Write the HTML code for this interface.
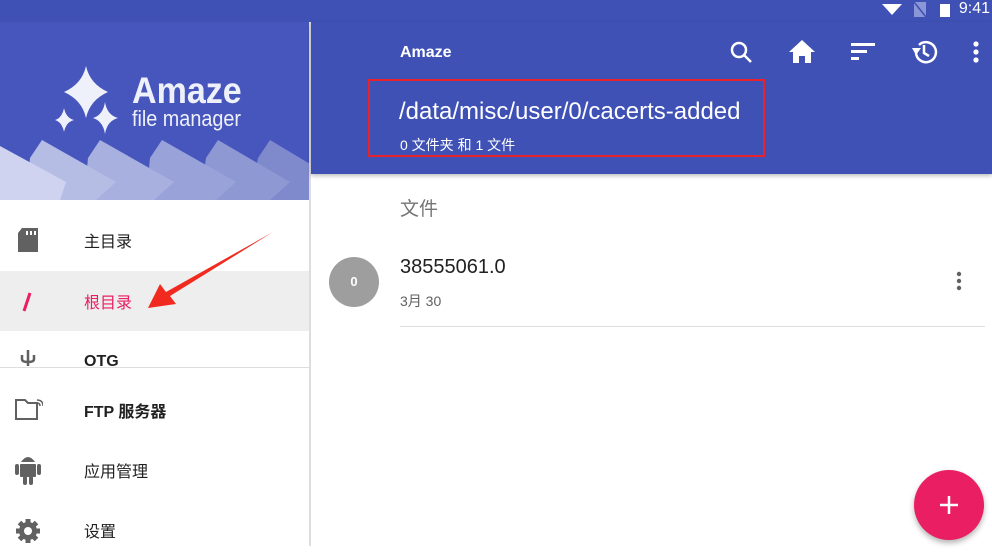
<!DOCTYPE html>
<html><head><meta charset="utf-8"><style>
*{margin:0;padding:0;box-sizing:border-box}
body{width:992px;height:546px;overflow:hidden;background:#fff;font-family:"Liberation Sans","Noto Sans CJK SC",sans-serif;position:relative}
.abs{position:absolute}
.item{position:absolute;left:0;width:309px;height:60px}
.item .t{position:absolute;left:84px;top:50%;transform:translateY(-50%);font-size:16px;color:#212121}
</style></head><body>
<div class="abs" style="left:0;top:0;width:992px;height:22px;background:#3f51b5"></div>
<div class="abs" style="right:2px;top:0;height:22px;line-height:18px;color:#fff;font-size:16px">9:41</div>
<svg class="abs" style="left:880px;top:0" width="80" height="20"><polygon points="2,4 22,4 12,15" fill="#fff"/><polygon points="34,2 46,2 46,17 34,17" fill="#8b96d6"/><line x1="34" y1="2" x2="46" y2="17" stroke="#3f51b5" stroke-width="1.5"/><rect x="60" y="4" width="10" height="13" fill="#fff"/></svg>
<!-- drawer header -->
<div class="abs" style="left:0;top:22px;width:309px;height:178px;background:#4756bd;overflow:hidden">
<svg width="309" height="178" style="position:absolute;left:0;top:0">
<polygon points="270,118 340,160 320,178 250,178 258,136" fill="#7f8acd"/>
<polygon points="218,118 290,160 270,178 200,178 206,136" fill="#8e98d3"/>
<polygon points="162,118 236,160 216,178 146,178 150,136" fill="#9aa3d9"/>
<polygon points="100,118 174,160 154,178 84,178 88,136" fill="#a8b0df"/>
<polygon points="42,118 116,160 96,178 26,178 30,136" fill="#b6bde5"/>
<polygon points="0,124 66,160 60,178 0,178" fill="#cfd3ef"/>
<g fill="#eef0fa">
<path d="M86,44 Q90,62 108,70 Q90,78 86,96 Q82,78 64,70 Q82,62 86,44Z"/>
<path d="M64,86 Q66,96 74,98 Q66,100 64,110 Q62,100 55,98 Q62,96 64,86Z"/>
<path d="M105,80 Q107,93 118,96 Q107,99 105,112 Q103,99 93,96 Q103,93 105,80Z"/>
</g>
</svg>
<div class="abs" style="left:132px;top:48px;color:#eef0fa;font-size:37px;font-weight:bold;transform:scaleX(0.92);transform-origin:left">Amaze</div>
<div class="abs" style="left:132px;top:84px;color:#eef0fa;font-size:22px;transform:scaleX(0.9);transform-origin:left">file manager</div>
</div>
<div class="abs" style="left:309px;top:22px;width:2px;height:524px;background:#ddd"></div>
<!-- items -->
<div class="item" style="top:210px"><svg class="abs" style="left:16px;top:18px" width="24" height="26"><path d="M6,0 H22 V24 H2 V5Z" fill="#616161" rx="2"/><rect x="10" y="3" width="2" height="4" fill="#fff"/><rect x="14" y="3" width="2" height="4" fill="#fff"/><rect x="18" y="3" width="2" height="4" fill="#fff"/></svg><span class="t">主目录</span></div>
<div class="item" style="top:271px;background:#eeeeee"><svg class="abs" style="left:20px;top:19px" width="14" height="24"><line x1="10" y1="3" x2="4" y2="21" stroke="#e91e63" stroke-width="3"/></svg><span class="t" style="color:#e91e63">根目录</span></div>
<svg class="abs" style="left:140px;top:228px" width="140" height="85"><polygon points="133,4 30,68 36,76 8,80 20,56 26,64" fill="#f02a1e"/></svg>
<div class="abs" style="left:84px;top:353px;font-size:16px;font-weight:bold;color:#212121;height:14px;overflow:hidden;line-height:18px">OTG</div>
<svg class="abs" style="left:18px;top:350px" width="20" height="18"><path d="M10,0 V16 M4,5 V9 Q4,12 10,12 Q16,12 16,9 V5" stroke="#616161" stroke-width="2.5" fill="none"/></svg>
<div class="abs" style="left:0;top:367px;width:309px;height:1px;background:#ddd"></div>
<div class="item" style="top:380px"><svg class="abs" style="left:15px;top:18px" width="28" height="24"><path d="M1,2 H10 L13,5 H22 V21 H1Z" stroke="#616161" stroke-width="2" fill="none"/><path d="M22,2 Q28,2 28,8 M22,5 Q25,5 25,8" stroke="#616161" stroke-width="1.5" fill="none"/></svg><span class="t" style="font-weight:bold">FTP 服务器</span></div>
<div class="item" style="top:440px"><svg class="abs" style="left:15px;top:14px" width="26" height="32"><path d="M6,8 Q13,-2 20,8Z" fill="#616161"/><rect x="5" y="10" width="16" height="13" rx="1" fill="#616161"/><rect x="0" y="10" width="4" height="11" rx="2" fill="#616161"/><rect x="22" y="10" width="4" height="11" rx="2" fill="#616161"/><rect x="8" y="22" width="4" height="9" rx="2" fill="#616161"/><rect x="14" y="22" width="4" height="9" rx="2" fill="#616161"/></svg><span class="t">应用管理</span></div>
<div class="item" style="top:500px"><svg class="abs" style="left:15px;top:18px" width="26" height="26"><circle cx="13" cy="13" r="9" fill="#616161"/><g stroke="#616161" stroke-width="5"><line x1="13" y1="1" x2="13" y2="25"/><line x1="1" y1="13" x2="25" y2="13"/><line x1="4.5" y1="4.5" x2="21.5" y2="21.5"/><line x1="21.5" y1="4.5" x2="4.5" y2="21.5"/></g><circle cx="13" cy="13" r="4" fill="#fff"/></svg><span class="t">设置</span></div>
<!-- main header -->
<div class="abs" style="left:311px;top:22px;width:681px;height:152px;background:#3f51b5;box-shadow:0 2px 4px rgba(0,0,0,.25)"></div>
<div class="abs" style="left:400px;top:44px;color:#fff;font-size:16px;font-weight:bold">Amaze</div>
<svg class="abs" style="left:720px;top:30px" width="270" height="50">
<g fill="none" stroke="#fff" stroke-width="2.5"><circle cx="19" cy="20" r="7"/><line x1="24" y1="25" x2="31" y2="32"/></g>
<path d="M82,10 L95,22 H91 V33 H85 V26 H79 V33 H73 V22 H69Z" fill="#fff"/>
<g fill="#fff"><rect x="131" y="13" width="24" height="3"/><rect x="131" y="20" width="16" height="3"/><rect x="131" y="27" width="8" height="3"/></g>
<g fill="none" stroke="#fff" stroke-width="2.5"><path d="M196,23 A10,10 0 1 0 199,15"/><path d="M204,15 V23 L209,26"/></g>
<polygon points="192,18 201,18 196,25" fill="#fff"/>
<g fill="#fff"><circle cx="256" cy="14" r="2.6"/><circle cx="256" cy="22" r="2.6"/><circle cx="256" cy="30" r="2.6"/></g>
</svg>
<div class="abs" style="left:368px;top:79px;width:397px;height:78px;border:2px solid #e8222a"></div>
<div class="abs" style="left:399px;top:98px;color:#fff;font-size:24px">/data/misc/user/0/cacerts-added</div>
<div class="abs" style="left:400px;top:135px;color:#fff;font-size:14px">0 文件夹 和 1 文件</div>
<div class="abs" style="left:400px;top:194px;color:#757575;font-size:19px">文件</div>
<div class="abs" style="left:329px;top:257px;width:50px;height:50px;border-radius:50%;background:#9e9e9e;color:#fff;font-size:13px;font-weight:bold;text-align:center;line-height:50px">0</div>
<div class="abs" style="left:400px;top:256px;color:#212121;font-size:20px">38555061.0</div>
<div class="abs" style="left:400px;top:291px;color:#616161;font-size:14px">3月 30</div>
<svg class="abs" style="left:950px;top:270px" width="20" height="24"><g fill="#616161"><circle cx="9" cy="4" r="2.2"/><circle cx="9" cy="11" r="2.2"/><circle cx="9" cy="18" r="2.2"/></g></svg>
<div class="abs" style="left:400px;top:326px;width:585px;height:1px;background:#ddd"></div>
<div class="abs" style="left:914px;top:470px;width:70px;height:70px;border-radius:50%;background:#e91e63;box-shadow:0 3px 6px rgba(0,0,0,.3)"></div>
<svg class="abs" style="left:939px;top:495px" width="20" height="20"><path d="M10,1 V19 M1,10 H19" stroke="#fff" stroke-width="2.5"/></svg>
</body></html>
